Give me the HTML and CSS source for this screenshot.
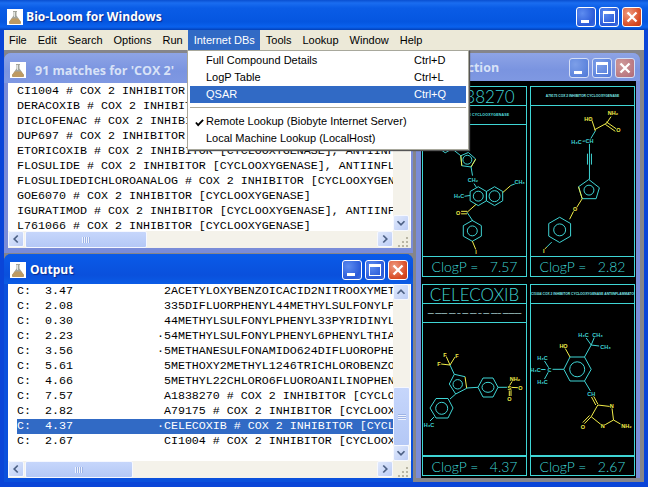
FILE: index.html
```html
<!DOCTYPE html>
<html lang="en">
<head>
<meta charset="utf-8">
<title>Bio-Loom for Windows</title>
<link rel="stylesheet" href="styles.css">
</head>
<body>
<svg class="defs" width="0" height="0" aria-hidden="true">
  <symbol id="flask" viewBox="0 0 16 16">
    <rect width="16" height="16" fill="#fff"/>
    <path d="M6 2h4v1h-.5v3.500L14 13q.5 2-1.500 2h-9Q1.500 15 2 13l4.500-6.500V3H6z" fill="#a3a59c"/>
    <path d="M4.800 9.500h6.400L14 13q.5 2-1.500 2h-9Q1.500 15 2 13z" fill="#bd9a63"/>
    <path d="M7 3h1v5H7z" fill="#e2e4e0"/>
  </symbol>
  <symbol id="x" viewBox="0 0 20 20">
    <path d="M5 5l10 10M15 5L5 15" stroke="#fff" stroke-width="2.600" fill="none"/>
  </symbol>
  <symbol id="dots" viewBox="0 0 18 17">
    <path d="M13 6h2v2h-2zM9 10h2v2H9zM13 10h2v2h-2zM5 14h2v2H5zM9 14h2v2H9zM13 14h2v2h-2z" fill="#b8b5a4"/>
  </symbol>
</svg>
<div class="app">
  <header class="titlebar">
    <svg class="icon"><use href="#flask"/></svg>
    <span class="title-main">Bio-Loom for Windows</span>
    <div class="controls">
      <span class="btn min"></span><span class="btn max"></span><span class="btn close"><svg><use href="#x"/></svg></span>
    </div>
  </header>
  <nav class="menubar">
    <span class="mi">File</span><span class="mi">Edit</span><span class="mi">Search</span><span class="mi">Options</span><span class="mi">Run</span><span class="mi on">Internet DBs</span><span class="mi">Tools</span><span class="mi">Lookup</span><span class="mi">Window</span><span class="mi">Help</span>
  </nav>
  <main class="desktop">

    <section class="win win-matches inactive">
      <div class="win-title">
        <svg class="icon"><use href="#flask"/></svg>
        <span class="title-sub">91 matches for 'COX 2'</span>
      </div>
      <div class="win-body">
        <div class="list-row">
<pre class="list list-top">CI1004 # COX 2 INHIBITOR [CYCLOOXYGENASE]
DERACOXIB # COX 2 INHIBITOR [CYCLOOXYGENASE], ANTIINFL
DICLOFENAC # COX 2 INHIBITOR [CYCLOOXYGENASE], ANTIINFL
DUP697 # COX 2 INHIBITOR [CYCLOOXYGENASE]
ETORICOXIB # COX 2 INHIBITOR [CYCLOOXYGENASE], ANTIINFL
FLOSULIDE # COX 2 INHIBITOR [CYCLOOXYGENASE], ANTIINFL
FLOSULIDEDICHLOROANALOG # COX 2 INHIBITOR [CYCLOOXYGEN
GOE6070 # COX 2 INHIBITOR [CYCLOOXYGENASE]
IGURATIMOD # COX 2 INHIBITOR [CYCLOOXYGENASE], ANTIINFL
L761066 # COX 2 INHIBITOR [CYCLOOXYGENASE]</pre>
          <div class="vscroll">
            <span class="track"></span>
            <span class="sb-btn"><svg viewBox="0 0 16 16"><path class="chev" d="M4 6l4 4 4-4"/></svg></span>
          </div>
        </div>
        <div class="hscroll">
          <span class="sb-btn"><svg viewBox="0 0 16 16"><path class="chev" d="M10 4L6 8l4 4"/></svg></span>
          <span class="thumb thumb-top"><i></i></span>
          <span class="track"></span>
          <span class="sb-btn"><svg viewBox="0 0 16 16"><path class="chev" d="M6 4l4 4-4 4"/></svg></span>
          <svg class="grip"><use href="#dots"/></svg>
        </div>
      </div>
    </section>

    <section class="win win-output">
      <div class="win-title">
        <svg class="icon"><use href="#flask"/></svg>
        <span class="title-act">Output</span>
        <div class="controls">
          <span class="btn min"></span><span class="btn max"></span><span class="btn close"><svg><use href="#x"/></svg></span>
        </div>
      </div>
      <div class="win-body">
        <div class="list-row">
          <div class="list list-out">
<pre class="row">C:  3.47             2ACETYLOXYBENZOICACID2NITROOXYMETHYL</pre>
<pre class="row">C:  2.08             335DIFLUORPHENYL44METHYLSULFONYLPHENYL</pre>
<pre class="row">C:  0.30             44METHYLSULFONYLPHENYL33PYRIDINYL</pre>
<pre class="row">C:  2.23            ·54METHYLSULFONYLPHENYL6PHENYLTHIAZOLE</pre>
<pre class="row">C:  3.56            ·5METHANESULFONAMIDO624DIFLUOROPHENYL</pre>
<pre class="row">C:  5.61             5METHOXY2METHYL1246TRICHLOROBENZOYL</pre>
<pre class="row">C:  4.66             5METHYL22CHLORO6FLUOROANILINOPHENYL</pre>
<pre class="row">C:  7.57             A1838270 # COX 2 INHIBITOR [CYCLOOXYGENASE]</pre>
<pre class="row">C:  2.82             A79175 # COX 2 INHIBITOR [CYCLOOXYGENASE]</pre>
<pre class="row sel">C:  4.37            ·CELECOXIB # COX 2 INHIBITOR [CYCLOOXYGENASE]</pre>
<pre class="row">C:  2.67             CI1004 # COX 2 INHIBITOR [CYCLOOXYGENASE]</pre>
          </div>
          <div class="vscroll">
            <span class="sb-btn"><svg viewBox="0 0 16 16"><path class="chev" d="M4 10l4-4 4 4"/></svg></span>
            <span class="track"></span>
            <span class="thumb thumb-v"><i></i></span>
            <span class="sb-btn"><svg viewBox="0 0 16 16"><path class="chev" d="M4 6l4 4 4-4"/></svg></span>
          </div>
        </div>
        <div class="hscroll">
          <span class="sb-btn"><svg viewBox="0 0 16 16"><path class="chev" d="M10 4L6 8l4 4"/></svg></span>
          <span class="thumb thumb-out"><i></i></span>
          <span class="track"></span>
          <span class="sb-btn"><svg viewBox="0 0 16 16"><path class="chev" d="M6 4l4 4-4 4"/></svg></span>
          <svg class="grip"><use href="#dots"/></svg>
        </div>
      </div>
    </section>

    <section class="win win-struct inactive">
      <div class="win-title">
        <svg class="icon"><use href="#flask"/></svg>
        <span class="title-sub">Selection</span>
        <div class="controls">
          <span class="btn min"></span><span class="btn max"></span><span class="btn close"><svg><use href="#x"/></svg></span>
        </div>
      </div>
      <div class="cards">

        <article class="card">
          <div class="cell cell-name">A1838270</div>
          <div class="cell cell-sub">COX2 INHIBITOR CYCLOOXYGENASE</div>
          <svg class="mol" viewBox="423 125 103 132">
            <path class="c" d="M438 148l7 5 7-4 8.700 7M460.700 156l7.600-3.300 7.400 6.600-4.700 8-9.300-1.300z"/>
            <circle class="c" cx="467.300" cy="160" r="4.500"/>
            <path class="y" d="M475.700 159.300l-4.700 8M461.700 166l-1-10"/>
            <path class="c" d="M471 167l1.500 9M474 184l2.500 4M478.300 187.200l8.200 4.800v9.400l-8.200 4.800-8.200-4.800V192zM494.700 187.200l8.200 4.800v9.400l-8.200 4.800-8.200-4.800V192zM463 197l7-1M467 213l6 9M472.300 221.200l9.100 5.200V237l-9.100 5.200-9.100-5.200v-10.600z"/>
            <circle class="c" cx="478.300" cy="196.700" r="5"/><circle class="c" cx="494.700" cy="196.700" r="5.500"/><circle class="c" cx="472.300" cy="231.700" r="5"/>
            <path class="y" d="M476 205l-9 8M461 212l6 0M461 214.500l6 0M472.300 242l3.700 9M503 193l8-7"/>
            <path class="c" d="M511 186l5-2"/>
            <text class="lc" x="473" y="182" text-anchor="middle">CH₂</text>
            <text class="lc" x="459" y="199" text-anchor="middle">H₃C</text>
            <text class="ly" x="458" y="215.500" text-anchor="middle">O</text>
            <text class="ly" x="476" y="255" text-anchor="middle">I</text>
            <text class="lc" x="520" y="184" text-anchor="middle">CH₃</text>
          </svg>
          <div class="cell cell-log">ClogP =   7.57</div>
        </article>

        <article class="card">
          <div class="cell cell-tiny">A79175 COX 2 INHIBITOR CYCLOOXYGENASE</div>
          <svg class="mol tall" viewBox="532 106 102 151">
            <path class="y" d="M611.700 116.700l-4.400 6.600M607 122l10 7M606 124.500l10 7M607.300 123.300L595 130M596 131l-4-12M590 119l2 0"/>
            <path class="c" d="M596 131l-6 10M583 141.500l5-.5M590 144v36M588 154v11M592 154v11M589.300 180l10.700 8.300-3.300 11h-14l-3.700-12z"/>
            <circle class="c" cx="589.500" cy="190.700" r="5"/>
            <path class="y" d="M582.700 199.300L576 210M579 187.300l3.700 12M574 212l-4 8"/>
            <path class="c" d="M560 218l11 6.300V237l-11 6.400-11-6.400v-12.700zM552 243l-5 5"/>
            <circle class="c" cx="560" cy="230.700" r="6"/>
            <path class="y" d="M547 248l-2 2"/>
            <text class="ly" x="613.700" y="115.500" text-anchor="middle">NH₂</text>
            <text class="ly" x="619" y="132.500" text-anchor="middle">O</text>
            <text class="ly" x="589" y="121.500" text-anchor="middle">HO</text>
            <text class="lc" x="577" y="144" text-anchor="middle">H₃C</text>
            <text class="lc" x="590" y="143.500" text-anchor="middle">CH</text>
            <text class="ly" x="575.700" y="212" text-anchor="middle">O</text>
            <text class="ly" x="544" y="254" text-anchor="middle">I</text>
          </svg>
          <div class="cell cell-log">ClogP =   2.82</div>
        </article>

        <article class="card">
          <div class="cell cell-name">CELECOXIB</div>
          <div class="cell cell-sub dashes">— —— ‒‒ ‒ — ‒‒ ‒ — ‒‒‒ ——‒‒</div>
          <svg class="mol" viewBox="423 323 103 132">
            <path class="y" d="M450 365l-4-9M450 365l5-8M450 365l-9-1M465 376.700l1.700 11.600"/>
            <path class="c" d="M450 365l4.300 9.300M454.300 374.300L465 376.700M466.700 388.300l-11 5.700-6.400-10 5-9.700M466.700 388l11.300-.7M478 387.300l5-9.300h10l5 9.300-5 9.700h-10zM455.700 394l-5.700 5M430 408l6-9.500h12l5 9.500-5 10h-12zM434 417l-4 4"/>
            <circle class="c" cx="457.700" cy="384.300" r="4.700"/>
            <ellipse class="c" cx="488" cy="387.300" rx="6" ry="5"/>
            <circle class="c" cx="441.700" cy="408.300" r="6"/>
            <path class="c" d="M498 387.300h9"/>
            <path class="y" d="M509.300 387.300l9 .4M509.300 389v7M511 389v7M509.300 386l3-5"/>
            <text class="ly" x="445" y="356.500" text-anchor="middle">F</text>
            <text class="ly" x="457" y="357.500" text-anchor="middle">F</text>
            <text class="ly" x="439" y="366" text-anchor="middle">F</text>
            <text class="ly" x="515" y="380.500" text-anchor="middle">NH₂</text>
            <text class="ly" x="509.300" y="389.500" text-anchor="middle">S</text>
            <text class="ly" x="520.500" y="390" text-anchor="middle">O</text>
            <text class="ly" x="509.300" y="401" text-anchor="middle">O</text>
            <text class="lc" x="429" y="427" text-anchor="middle">H₃C</text>
          </svg>
          <div class="cell cell-log double">ClogP =   4.37</div>
        </article>

        <article class="card">
          <div class="cell cell-tiny">CI1004 COX 2 INHIBITOR CYCLOOXYGENASE ANTIINFLAMMATORY</div>
          <svg class="mol tall" viewBox="532 304 102 151">
            <path class="c" d="M564.300 369.300l6.200-12.300H585l6.700 12.300-6.700 11.700h-14.500zM585 357l6.700-12M591.700 345l-5-7M591.700 345l3.300-8M591.700 345l8 1M564.300 369.300H553M550 369l-5-8M546 369.500h-5M550 370l-5 9M585 381l6 10"/>
            <circle class="c" cx="577.700" cy="369.300" r="7.500"/>
            <path class="y" d="M570.500 357l-5-9M594 396l4.300 8M592 397l4.300 8M598.300 405l14 1.700 1.700 13.300-10.700 6-11.600-9.300zM591.700 416.700l-6.700 7M590 415.500l-6.700 7M614 420l7 4"/>
            <text class="ly" x="564" y="348" text-anchor="middle">HO</text>
            <text class="lc" x="584" y="337" text-anchor="middle">H₃C</text>
            <text class="lc" x="598" y="336.500" text-anchor="middle">CH₃</text>
            <text class="lc" x="606" y="349" text-anchor="middle">CH₃</text>
            <text class="lc" x="550" y="371.500" text-anchor="middle">C</text>
            <text class="lc" x="543" y="360" text-anchor="middle">H₃C</text>
            <text class="lc" x="536" y="372" text-anchor="middle">H₃C</text>
            <text class="lc" x="543" y="384" text-anchor="middle">H₃C</text>
            <text class="lc" x="591.700" y="395.500" text-anchor="middle">CH</text>
            <text class="ly" x="612.300" y="408" text-anchor="middle">N</text>
            <text class="ly" x="603.300" y="428" text-anchor="middle">N</text>
            <text class="ly" x="583.300" y="428.500" text-anchor="middle">O</text>
            <text class="ly" x="627" y="428" text-anchor="middle">NH₂</text>
          </svg>
          <div class="cell cell-log double">ClogP =   2.67</div>
        </article>

      </div>
    </section>
  </main>

  <div class="menu">
    <div class="item"><span>Full Compound Details</span><span class="key">Ctrl+D</span></div>
    <div class="item"><span>LogP Table</span><span class="key">Ctrl+L</span></div>
    <div class="item active"><span>QSAR</span><span class="key">Ctrl+Q</span></div>
    <div class="sep"></div>
    <div class="item"><svg class="check" viewBox="0 0 10 10"><path d="M1 5l2.500 3L9 2" /></svg><span>Remote Lookup (Biobyte Internet Server)</span></div>
    <div class="item"><span>Local Machine Lookup (LocalHost)</span></div>
  </div>
</div>
</body>
</html>
```
FILE: styles.css
```css
* { box-sizing: border-box; }
html, body { margin: 0; padding: 0; }
.defs { position: absolute; }
.app {
  width: 648px; height: 487px; position: relative; overflow: hidden;
  display: flex; flex-direction: column;
  background: #0a45d8;
  font-family: "Liberation Sans", sans-serif;
}
.titlebar {
  height: 30px; flex: none; display: flex; align-items: center; padding: 3px 6px 0 7px;
  background: linear-gradient(#0a4fd0 0, #1a6df0 3px, #0a5ce6 8px, #0556e0 22px, #0a62ee 27px, #0340b8 30px);
}
.icon { width: 16px; height: 16px; flex: none; }
.title-main {
  margin-left: 3px; color: #fff; font: 700 12.100px "Open Sans", sans-serif;
  text-shadow: 1px 1px 1px #0a2a90; white-space: pre;
}
.controls { margin-left: auto; display: flex; gap: 3px; }
.btn {
  width: 20px; height: 20px; border: 1px solid #fff; border-radius: 3px; position: relative; display: block;
  background: radial-gradient(circle at 30% 30%, #5d8cf0, #2a5ad8 70%, #3f6fe0);
}
.btn.close { background: radial-gradient(circle at 30% 30%, #ee9a80, #d84a22 70%, #c23a18); }
.btn.close svg { display: block; width: 18px; height: 18px; }
.btn.min::after { content: ""; position: absolute; left: 4px; bottom: 3px; width: 8px; height: 3px; background: #fff; }
.btn.max::after { content: ""; position: absolute; left: 3px; top: 3px; right: 3px; bottom: 3px; border: 1px solid #fff; border-top-width: 3px; }

.menubar {
  height: 20px; flex: none; margin: 0 4px; background: #ece9d8; display: flex; align-items: center;
  font-size: 11px; color: #000;
}
.mi { padding: 0 5.500px; line-height: 20px; white-space: pre; }
.mi:first-child { margin-left: -.5px; }
.mi.on { background: #316ac5; color: #fff; }

.desktop {
  flex: 1; margin: 0 4px 5px; position: relative; background: #85858a;
}
.win { position: absolute; display: flex; flex-direction: column; border-radius: 7px 7px 0 0; background: #0a50dc; }
.win.inactive { background: #7a8cd8; }
.win-matches { left: 0; top: 3px; width: 409px; height: 200px; padding: 0 2px 5px 4px; }
.win-output { left: 0; top: 204px; width: 409px; height: 228px; padding: 0 2px 4px 4px; }
.win-struct { left: 412px; top: 3px; width: 224px; height: 425px; padding: 0 4px 0 5px; }
.win-title {
  height: 30px; flex: none; display: flex; align-items: center;
  background: linear-gradient(#0a5be8, #0a50dc 70%, #0a5ce6);
  border-radius: 7px 7px 0 0; margin: 0 -2px 0 -4px; padding: 1px 5px 0 6px;
}
.inactive .win-title { background: linear-gradient(#8ea4e6, #7a94e0 60%, #7f98e2); }
.win-matches .win-title { padding-top: 4px; }
.win-struct .win-title { height: 28px; margin: 0 -4px 0 -5px; padding-right: 5px; }
.inactive .btn { background: radial-gradient(circle at 30% 30%, #7d9fe8, #4f78d8); border-color: #d5def5; }
.inactive .btn.close { background: radial-gradient(circle at 30% 30%, #cf9a9a, #b06a78); }
.title-sub { margin-left: 9px; color: #d8e2f7; font: 700 12.500px "Open Sans", sans-serif; white-space: pre; }
.win-struct .title-sub { margin-left: 4px; }
.title-act { margin-left: 4px; color: #fff; font: 700 12px "Open Sans", sans-serif; text-shadow: 1px 1px 1px #0a2a90; }
.win-body { flex: 1; min-height: 0; display: flex; flex-direction: column; background: #fff; }
.list-row { flex: 1; min-height: 0; display: flex; }
.list {
  flex: 1; min-width: 0; margin: 0; padding: 1px 0 0 9px; overflow: hidden; background: #fff;
  font: 11.670px/15px "Liberation Mono", monospace; color: #000;
}
.row { margin: 0; font: inherit; height: 15px; overflow: hidden; }
.row.sel { background: #316ac5; color: #fff; }
.list-out { padding: 0 0 0 9px; padding-top: 0; }

.vscroll { width: 17px; flex: none; background: #f4f2ea; display: flex; flex-direction: column; margin-right: 1px; position: relative; }
.vscroll .track { flex: 1; }
.hscroll { height: 17px; flex: none; display: flex; background: #f4f2ea; }
.hscroll .track { flex: 1; }
.sb-btn {
  width: 16px; height: 16px; flex: none; display: block; border: 1px solid #f6f8ff; border-radius: 2px;
  background: linear-gradient(135deg, #e0e9fc, #bccdf6);
}
.sb-btn svg { display: block; width: 14px; height: 14px; }
.chev { fill: none; stroke: #4d6185; stroke-width: 2; }
.thumb {
  display: flex; align-items: center; justify-content: center; flex: none;
  border: 1px solid #f6f8ff; border-radius: 2px; background: linear-gradient(#c6d6fb, #b4c8f6);
}
.thumb i { display: block; width: 8px; height: 6px; background: repeating-linear-gradient(90deg, #eef3fe 0 1px, #9db3e6 1px 2px); }
.thumb-top { width: 122px; margin-left: 1px; }
.thumb-out { width: 108px; margin-left: 1px; }
.thumb-v { position: absolute; left: 0; right: 0; top: 103px; height: 59px; }
.thumb-v i { width: 8px; height: 6px; background: repeating-linear-gradient(0deg, #eef3fe 0 1px, #9db3e6 1px 2px); }
.grip { width: 18px; height: 17px; flex: none; background: #f0eee2; display: block; }

.cards {
  flex: 1; min-height: 0; background: #000; padding: 5px 1px 2px 1px;
  display: grid; grid-template-columns: 105px 105px; grid-template-rows: 191px 192px; column-gap: 3px; row-gap: 7px;
}
.card { border: 1px solid #3fd5d5; display: flex; flex-direction: column; min-height: 0; color: #3fd5d5; }
.cell { flex: none; overflow: hidden; white-space: pre; text-align: center; }
.cell-name { height: 19px; border-bottom: 1px solid #3fd5d5; font: 300 17px/19px Lato, "Liberation Sans", sans-serif; }
.cell-sub { height: 19px; border-bottom: 1px solid #3fd5d5; font: 700 3.500px/18px "Liberation Sans", sans-serif; letter-spacing: .2px; color: #56e0e0; }
.dashes { font-size: 6px; color: #d5ffff; letter-spacing: 0; }
.cell-tiny { height: 19px; border-bottom: 1px solid #3fd5d5; font: 700 3.300px/18px "Liberation Sans", sans-serif; color: #7de8e8; }
.cell-log { height: 20px; border-top: 1px solid #3fd5d5; font: 300 14px/19px Lato, "Liberation Sans", sans-serif; }
.cell-log.double { height: 20px; border-top-width: 2px; }
.mol { flex: 1; min-height: 0; width: 100%; display: block; }
.c, .y { fill: none; stroke-width: 1; }
.c { stroke: #3fd5d5; }
.y { stroke: #f2ee4a; }
.lc, .ly { font: 700 5.500px "Liberation Sans", sans-serif; stroke: #000; stroke-width: 1.200px; paint-order: stroke; }
.lc { fill: #3fd5d5; }
.ly { fill: #f2ee4a; }

.menu {
  position: absolute; left: 187px; top: 50px; width: 282px; height: 100px; background: #fff;
  border: 1px solid #a8a89c; box-shadow: 1px 1px 1px #555; padding: 1px 2px 0;
  font-size: 11px; color: #000;
}
.item { height: 17px; line-height: 17px; display: flex; padding-left: 16px; position: relative; white-space: pre; }
.item .key { position: absolute; left: 224px; }
.item.active { background: #316ac5; color: #fff; }
.sep { height: 1px; background: #aca899; margin: 4px 0 5px; }
.check { position: absolute; left: 5px; top: 5px; width: 9px; height: 9px; fill: none; stroke: #000; stroke-width: 2; }
```
